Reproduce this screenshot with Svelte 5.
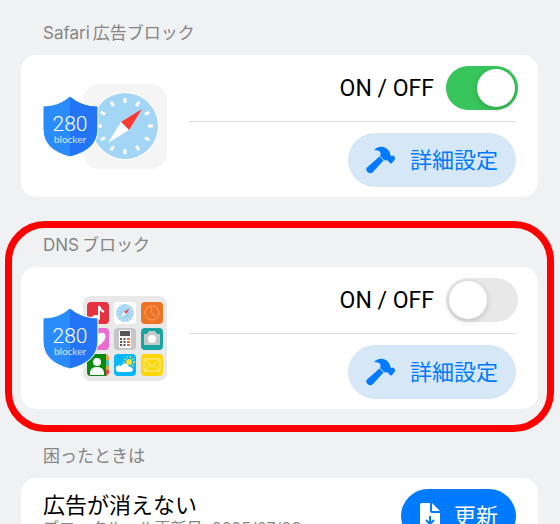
<script lang="ts">
  let adBlock = $state(true);
  let dnsBlock = $state(false);

  const ticks = Array.from({ length: 12 }, (_, i) => i * 30);
</script>

<svelte:head>
  <title>280blocker</title>
</svelte:head>

{#snippet shield()}
  <path d="M27 12Q38 22 55 22V45Q55 66 27 73Q0 66 0 45V22Q16 22 27 12Z" fill="#2a8bfb" stroke="#fff" />
  <path d="M27 13Q38 22 54 23V45Q54 65 27 72Z" fill="#2475f5" />
  <text class="brand-number" x="27" y="47" text-anchor="middle">280</text>
  <text class="brand-name" x="27" y="59" text-anchor="middle">blocker</text>
{/snippet}

{#snippet compass()}
  <circle r="34" fill="#fff" />
  <circle r="33" fill="#a3d6f5" />
  {#each ticks as angle}
    <path d="M0 -28V-23" stroke="#fff" stroke-width="3" transform="rotate({angle})" />
  {/each}
  <path d="M17 -17L-4 -4L4 4Z" fill="#fb3b30" />
  <path d="M-17 17L-4 -4L4 4Z" fill="#fff" />
{/snippet}

{#snippet hammer()}
  <svg class="hammer" viewBox="0 0 30 28" aria-hidden="true">
    <path
      d="M8 4C11 1 14 .6 17 1C20 1.400 23 4 24 7Q24 10 26 10Q27 9 28 10L29 12Q29 13 28.500 14L26 17Q25 18 24 17L22 15Q22 14 20 14.500L18 14L14 10Q16 6 12 4.500Q10 4 8 4Z"
      fill="#007aff"
    />
    <path d="M13.500 10.500L17.500 14.500L7 26Q4.500 28.500 1.500 26Q-1 23 1.500 21Z" fill="#007aff" />
  </svg>
{/snippet}

<main>
  <section>
    <h2><span>Safari</span>広告ブロック</h2>
    <div class="card">
      <svg class="art" viewBox="0 0 124 85" aria-hidden="true">
        <rect x="40" width="84" height="85" rx="16" fill="#f5f5f5" />
        <g transform="translate(82 42)">{@render compass()}</g>
        {@render shield()}
      </svg>
      <div class="controls">
        <label class="switch-row">
          <span>ON / OFF</span>
          <input type="checkbox" role="switch" bind:checked={adBlock} />
        </label>
        <button class="detail">
          {@render hammer()}
          <span>詳細設定</span>
        </button>
      </div>
    </div>
  </section>

  <section class="highlighted">
    <h2><span>DNS</span>ブロック</h2>
    <div class="card">
      <svg class="art" viewBox="0 0 124 85" aria-hidden="true">
        <rect x="40" width="84" height="85" rx="8" fill="#e9e9e9" />

        <!-- music -->
        <rect x="44" y="6" width="22" height="22" rx="4" fill="#e7333f" />
        <path d="M56 22V10Q57 14 61 16" fill="none" stroke="#fff" stroke-width="2" />
        <ellipse cx="53" cy="22" rx="4" ry="3" fill="#fff" />

        <!-- safari -->
        <rect x="71" y="6" width="22" height="22" rx="4" fill="#fff" />
        <g transform="translate(82 17) scale(.27)">{@render compass()}</g>

        <!-- clock -->
        <rect x="98" y="6" width="22" height="22" rx="4" fill="#ed7424" />
        <g fill="none" stroke="#f5a66d">
          <circle cx="109" cy="17" r="7" />
          <path d="M108.500 12V17L112 20" />
        </g>

        <!-- health -->
        <rect x="44" y="32" width="22" height="22" rx="4" fill="#ec6bd0" />
        <path d="M55 50C42 43 47 33 55 38C63 33 67 43 55 50Z" fill="#fff" />

        <!-- calculator -->
        <rect x="71" y="32" width="22" height="22" rx="4" fill="#c6c6c6" />
        <rect x="76" y="34" width="12" height="18" rx="1" fill="#fff" />
        <path d="M77 35H87V40H77Z" fill="#555" />
        <path d="M78 42V51M81.500 42V51" stroke="#555" stroke-width="2" stroke-dasharray="2 1" />
        <path d="M85.500 42V51" stroke="#ee6830" stroke-width="3" stroke-dasharray="2 1" />

        <!-- camera -->
        <rect x="98" y="32" width="22" height="22" rx="4" fill="#18a5a0" />
        <path d="M101 38H104L106 35H112L114 38H117V49H101Z" fill="#c5c9ca" />
        <circle cx="109" cy="43" r="4" fill="#fff" />

        <!-- contacts -->
        <rect x="44" y="58" width="22" height="22" rx="4" fill="#eda14d" />
        <path d="M63 64H66V70H63Z" fill="#54bfb1" />
        <path d="M63 74H66V77L63 80Z" fill="#ef4050" />
        <path d="M48 58H63V80H48Q44 80 44 76V62Q44 58 48 58Z" fill="#078b0c" />
        <circle cx="54" cy="66" r="4" fill="#fff" />
        <path d="M47 79V76Q48 71 54 71Q60 71 61 76V79Z" fill="#fff" />

        <!-- weather -->
        <rect x="71" y="58" width="22" height="22" rx="4" fill="#06b8fa" />
        <circle cx="86" cy="66" r="5" fill="none" stroke="#e9e45a" stroke-width="2" stroke-dasharray="1 2" />
        <circle cx="86" cy="66" r="3" fill="#ffdd28" />
        <path d="M75 76Q72 75 73 71Q75 68 78 70Q80 66 84 68Q86 70 86 71Q90 71 90 74Q89 76 87 76Z" fill="#fff" />

        <!-- mail -->
        <rect x="98" y="58" width="22" height="22" rx="4" fill="#ffd50b" />
        <path d="M101 63H117V75H101ZL109 71L117 63M101 75L107 69M117 75L111 69" fill="none" stroke="#fff09a" />

        {@render shield()}
      </svg>
      <div class="controls">
        <label class="switch-row">
          <span>ON / OFF</span>
          <input type="checkbox" role="switch" bind:checked={dnsBlock} />
        </label>
        <button class="detail">
          {@render hammer()}
          <span>詳細設定</span>
        </button>
      </div>
    </div>
  </section>

  <section>
    <h2>困ったときは</h2>
    <div class="card help">
      <div>
        <p class="title">広告が消えない</p>
        <p class="note">ブロックルール更新日: 2025/07/08</p>
      </div>
      <button class="update">
        <svg viewBox="0 0 20 26" aria-hidden="true">
          <path d="M2 0H10V8Q10 10 12 10H20V24Q20 26 18 26H2Q0 26 0 24V2Q0 0 2 0Z" fill="#fff" />
          <path d="M12 0L20 8H12Z" fill="#fff" />
          <path d="M10 13V21M6 17L10 21L14 17" fill="none" stroke="#007aff" stroke-width="2" />
        </svg>
        <span>更新</span>
      </button>
    </div>
  </section>
</main>

<style>
  :global(html) {
    overflow: hidden;
  }

  :global(body) {
    margin: 0;
    background: #eff1f3;
    font-family: Inter, "Noto Sans CJK JP", sans-serif;
  }

  main {
    height: 100vh;
    padding: 0 22px 0 21px;
    overflow: hidden;
    box-sizing: border-box;
  }

  section {
    position: relative;
  }

  h2 {
    margin: 0;
    padding: 35px 22px 10px;
    font-size: 17px;
    line-height: 24px;
    font-weight: 400;
    color: #858585;
  }

  h2 span {
    margin-right: 3px;
  }

  section:first-child h2 {
    padding-top: 21px;
  }

  .highlighted h2 {
    padding-top: 36px;
  }

  .card {
    display: flex;
    gap: 22px;
    height: 142px;
    padding: 11px 22px;
    box-sizing: border-box;
    border-radius: 15px;
    background: #fff;
  }

  .art {
    width: 124px;
    height: 85px;
    flex: none;
    align-self: center;
  }

  .brand-number {
    font: 300 21px Roboto, sans-serif;
    fill: #fff;
  }

  .brand-name {
    font: 400 10px Lato, sans-serif;
    fill: #d5e6ff;
  }

  .controls {
    flex: 1;
    display: flex;
    flex-direction: column;
    align-items: flex-end;
    gap: 11px;
  }

  .switch-row {
    display: flex;
    justify-content: flex-end;
    align-items: center;
    gap: 12px;
    width: 100%;
    height: 56px;
    padding-bottom: 11px;
    box-sizing: border-box;
    border-bottom: 1px solid #dcdcdc;
    font: 400 23px Roboto, sans-serif;
    color: #000;
    flex: none;
  }

  input {
    appearance: none;
    width: 72px;
    height: 44px;
    margin: 0 -2px 0 0;
    padding: 3px;
    box-sizing: border-box;
    border-radius: 22px;
    background: #e8e8e8;
    flex: none;
  }

  input::before {
    content: "";
    display: block;
    width: 38px;
    height: 38px;
    border-radius: 50%;
    background: #fff;
    box-shadow: 0 2px 6px rgb(0 0 0 / 18%);
  }

  input:checked {
    background: #38c55b;
  }

  input:checked::before {
    margin-left: auto;
  }

  button {
    display: flex;
    align-items: center;
    border: none;
    border-radius: 27px;
    height: 54px;
    font: 400 22px "Noto Sans CJK JP", sans-serif;
    white-space: nowrap;
    flex: none;
  }

  button span {
    padding-bottom: 4px;
  }

  .detail {
    width: 168px;
    gap: 14px;
    padding: 0 18px;
    background: #d6e7f7;
    color: #007aff;
  }

  .hammer {
    width: 30px;
    height: 28px;
    flex: none;
  }

  .highlighted::after {
    content: "";
    position: absolute;
    inset: 24px -16px -23px;
    border: 7px solid #f00;
    border-radius: 40px;
    pointer-events: none;
  }

  .help {
    justify-content: space-between;
  }

  p {
    margin: 0;
  }

  .title {
    font-size: 22px;
    line-height: 32px;
    color: #000;
  }

  .note {
    font-size: 16px;
    line-height: 14px;
    color: #858585;
  }

  .update {
    width: 115px;
    gap: 14px;
    padding: 0 18px 0 19px;
    background: #007aff;
    color: #fff;
  }

  .update svg {
    width: 20px;
    height: 26px;
    flex: none;
  }
</style>
